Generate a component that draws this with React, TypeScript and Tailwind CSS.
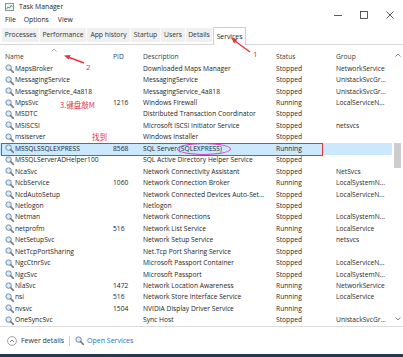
import React from 'react';

type Svc = { name: string; pid?: string; desc: string; status: string; group?: string };

const services: Svc[] = [
  { name: 'MapsBroker', desc: 'Downloaded Maps Manager', status: 'Stopped', group: 'NetworkService' },
  { name: 'MessagingService', desc: 'MessagingService', status: 'Stopped', group: 'UnistackSvcGr...' },
  { name: 'MessagingService_4a818', desc: 'MessagingService_4a818', status: 'Stopped', group: 'UnistackSvcGr...' },
  { name: 'MpsSvc', pid: '1216', desc: 'Windows Firewall', status: 'Running', group: 'LocalServiceN...' },
  { name: 'MSDTC', desc: 'Distributed Transaction Coordinator', status: 'Stopped' },
  { name: 'MSiSCSI', desc: 'Microsoft iSCSI Initiator Service', status: 'Stopped', group: 'netsvcs' },
  { name: 'msiserver', desc: 'Windows Installer', status: 'Stopped' },
  { name: 'MSSQLSSQLEXPRESS', pid: '8568', desc: 'SQL Server (SQLEXPRESS)', status: 'Running' },
  { name: 'MSSQLServerADHelper100', desc: 'SQL Active Directory Helper Service', status: 'Stopped' },
  { name: 'NcaSvc', desc: 'Network Connectivity Assistant', status: 'Stopped', group: 'NetSvcs' },
  { name: 'NcbService', pid: '1060', desc: 'Network Connection Broker', status: 'Running', group: 'LocalSystemN...' },
  { name: 'NcdAutoSetup', desc: 'Network Connected Devices Auto-Set...', status: 'Stopped', group: 'LocalServiceN...' },
  { name: 'Netlogon', desc: 'Netlogon', status: 'Stopped' },
  { name: 'Netman', desc: 'Network Connections', status: 'Stopped', group: 'LocalSystemN...' },
  { name: 'netprofm', pid: '516', desc: 'Network List Service', status: 'Running', group: 'LocalService' },
  { name: 'NetSetupSvc', desc: 'Network Setup Service', status: 'Stopped', group: 'netsvcs' },
  { name: 'NetTcpPortSharing', desc: 'Net.Tcp Port Sharing Service', status: 'Stopped' },
  { name: 'NgcCtnrSvc', desc: 'Microsoft Passport Container', status: 'Stopped', group: 'LocalServiceN...' },
  { name: 'NgcSvc', desc: 'Microsoft Passport', status: 'Stopped', group: 'LocalSystemN...' },
  { name: 'NlaSvc', pid: '1472', desc: 'Network Location Awareness', status: 'Running', group: 'NetworkService' },
  { name: 'nsi', pid: '516', desc: 'Network Store Interface Service', status: 'Running', group: 'LocalService' },
  { name: 'nvsvc', pid: '1504', desc: 'NVIDIA Display Driver Service', status: 'Running' },
  { name: 'OneSyncSvc', desc: 'Sync Host', status: 'Stopped', group: 'UnistackSvcGr...' },
];

const tabs = [
  { label: 'Processes', w: 'w-[37px]' },
  { label: 'Performance', w: 'w-[46px]' },
  { label: 'App history', w: 'w-[43px]' },
  { label: 'Startup', w: 'w-[29px]' },
  { label: 'Users', w: 'w-[24px]' },
  { label: 'Details', w: 'w-[26px]' },
];

const SvcIcon = () => (
  <svg width="9" height="9" viewBox="0 0 9 9" className="shrink-0">
    <circle cx="3.6" cy="3.6" r="2.7" fill="#dcebf7" stroke="#6d8fb3" strokeWidth="1" />
    <line x1="5.6" y1="5.6" x2="8.4" y2="8.4" stroke="#7a7a7a" strokeWidth="1.6" strokeLinecap="round" />
  </svg>
);

const grid = 'grid grid-cols-[113px_30px_133px_60px_56px] items-center';

export default function App() {
  return (
    <div className="relative w-[403px] h-[357px] overflow-hidden bg-white text-[#1e1e1e] font-['Open_Sans',sans-serif] text-[6.7px] leading-[10px]">
      {/* title + menu */}
      <div className="flex h-[27px]">
        <div className="flex-1 flex flex-col">
          <div className="h-[13px] flex items-center pl-[5px] gap-[5px]">
            <svg width="9" height="8" viewBox="0 0 9 8">
              <rect x="0.5" y="0.5" width="8" height="7" fill="#eef2f5" stroke="#8a949c" />
              <polyline points="1.5,6 3,4 4.5,5 6,2.5 7.5,3.5" fill="none" stroke="#3c9a4a" strokeWidth="0.9" />
            </svg>
            <span className="text-[6.8px] text-[#222]">Task Manager</span>
          </div>
          <div className="h-[14px] flex items-center pl-[5px] text-[6.8px] text-[#222]">
            <span>File</span>
            <span className="ml-[8px]">Options</span>
            <span className="ml-[9px]">View</span>
          </div>
        </div>
        <div className="flex items-center pt-[3px] pr-[9px] gap-[18px]">
          <svg width="8" height="8" viewBox="0 0 8 8"><line x1="0" y1="4.5" x2="8" y2="4.5" stroke="#333" strokeWidth="0.8" /></svg>
          <svg width="8" height="8" viewBox="0 0 8 8"><rect x="0.5" y="0.5" width="7" height="7" fill="none" stroke="#333" strokeWidth="0.8" /></svg>
          <svg width="8" height="8" viewBox="0 0 8 8"><path d="M0.5 0.5 L7.5 7.5 M7.5 0.5 L0.5 7.5" stroke="#333" strokeWidth="0.8" /></svg>
        </div>
      </div>

      {/* tabs */}
      <div className="h-[18px] flex items-end pl-[2px] gap-[1px] border-b border-[#d9d9d9]">
        {tabs.map((t) => (
          <div key={t.label} className={`${t.w} h-[14px] mb-[2px] bg-[#f0f0f0] flex items-center justify-center text-[6.8px] text-[#333] whitespace-nowrap`}>
            {t.label}
          </div>
        ))}
        <div className="w-[33px] h-[18px] -mb-[1px] bg-white border border-b-0 border-[#cfcfcf] flex items-center justify-center text-[6.8px] text-[#222]">
          Services
        </div>
      </div>

      {/* list */}
      <div className="flex h-[282px] border-b border-[#dcdcdc]">
        <div className="w-[392px] flex flex-col">
          <div className={`${grid} h-[18px] relative text-[#3a3a3a] whitespace-nowrap`}>
            <span className="pl-[5px] pt-[5px]">Name</span>
            <span className="pt-[5px]">PID</span>
            <span className="pt-[5px]">Description</span>
            <span className="pt-[5px]">Status</span>
            <span className="pt-[5px]">Group</span>
            <svg className="absolute left-[51px] top-[3px]" width="6" height="4" viewBox="0 0 6 4">
              <polyline points="0.5,3.5 3,1 5.5,3.5" fill="none" stroke="#9a9a9a" strokeWidth="0.8" />
            </svg>
          </div>
          {services.map((s) => {
            const sel = s.name === 'MSSQLSSQLEXPRESS';
            return (
              <div key={s.name} className={`${grid} h-[11.45px] whitespace-nowrap ${sel ? 'bg-[#cce8ff]' : ''}`}>
                <div className="flex items-center gap-[1px] pl-[5px]">
                  <SvcIcon />
                  <span>{s.name}</span>
                </div>
                <span>{s.pid ?? ''}</span>
                <span>{s.desc}</span>
                <span className="text-[#2a2a2a]">{s.status}</span>
                <span className="text-[#2a2a2a]">{s.group ?? ''}</span>
              </div>
            );
          })}
        </div>
        {/* scrollbar */}
        <div className="w-[11px] flex flex-col items-center">
          <svg className="mt-[8px]" width="6" height="4" viewBox="0 0 6 4">
            <polyline points="0.5,3.5 3,1 5.5,3.5" fill="none" stroke="#777" strokeWidth="0.9" />
          </svg>
          <div className="mt-[86px] w-[7px] h-[25px] bg-[#cdcdcd]" />
          <div className="flex-1" />
          <svg className="mb-[5px]" width="6" height="4" viewBox="0 0 6 4">
            <polyline points="0.5,0.5 3,3 5.5,0.5" fill="none" stroke="#777" strokeWidth="0.9" />
          </svg>
        </div>
      </div>

      {/* footer */}
      <div className="h-[27px] flex items-center pl-[7px] text-[7px]">
        <svg width="10" height="10" viewBox="0 0 10 10">
          <circle cx="5" cy="5" r="4.4" fill="none" stroke="#8a8a8a" strokeWidth="0.8" />
          <polyline points="3,6 5,4 7,6" fill="none" stroke="#666" strokeWidth="0.8" />
        </svg>
        <span className="ml-[4px] text-[#333]">Fewer details</span>
        <span className="ml-[5px] w-px h-[10px] bg-[#cfcfcf]" />
        <span className="ml-[5px]"><SvcIcon /></span>
        <span className="ml-[3px] text-[#1f6fc4]">Open Services</span>
      </div>
      <div className="h-[3px] bg-[#233a58]" />

      {/* annotations */}
      <div className="absolute left-[1px] top-[143px] w-[322px] h-[13px] border-[1.5px] border-[#e8323c] pointer-events-none" />
      <div className="absolute left-[177px] top-[143px] w-[54px] h-[12px] rounded-[50%] border-[1.5px] border-[#d83fc8] pointer-events-none" />
      <span className="absolute left-[92px] top-[132px] text-[#e8323c] text-[7.5px] leading-[10px] font-['Noto_Sans_CJK_SC',sans-serif]">找到</span>
      <span className="absolute left-[60px] top-[100px] text-[#e8323c] text-[7.5px] leading-[10px] font-['Noto_Sans_CJK_SC',sans-serif]">3.键盘敲M</span>
      <span className="absolute left-[86px] top-[62px] text-[#e8323c] text-[8px] leading-[10px]">2</span>
      <span className="absolute left-[253px] top-[49px] text-[#e8323c] text-[8px] leading-[10px]">1</span>
      <svg className="absolute left-0 top-0 pointer-events-none" width="403" height="357">
        <line x1="84" y1="63" x2="68" y2="57" stroke="#e8323c" strokeWidth="1.4" />
        <polygon points="64,55.5 70.5,55 68.5,59.5" fill="#e8323c" />
        <line x1="250" y1="52" x2="235" y2="41" stroke="#e8323c" strokeWidth="1.4" />
        <polygon points="231.5,38 237.5,39.5 234,43.5" fill="#e8323c" />
      </svg>
    </div>
  );
}
